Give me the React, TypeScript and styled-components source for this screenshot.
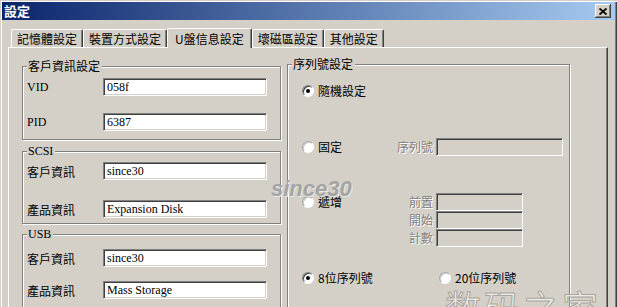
import styled, { createGlobalStyle } from 'styled-components';

const cjk = `"Noto Sans CJK TC", "Noto Sans CJK SC", sans-serif`;
const serif = `"Liberation Serif", "Noto Sans CJK TC", serif`;

const GlobalStyle = createGlobalStyle`
  html, body {
    margin: 0;
    padding: 0;
    background: #d4d0c8;
    overflow: hidden;
  }
  body {
    font-family: ${cjk};
    font-size: 12px;
  }
`;

const Window = styled.div`
  position: relative;
  width: 617px;
  height: 307px;
  box-sizing: border-box;
  padding: 2px 2px 0 2px;
  background: #d4d0c8;
  overflow: hidden;
  box-shadow: inset 1px 1px #d4d0c8, inset 2px 2px #fff, inset -1px 0 #404040,
    inset -2px 0 #808080;
`;

const TitleBar = styled.div`
  height: 18px;
  display: flex;
  align-items: center;
  justify-content: space-between;
  padding: 0 4px 0 2px;
  background: linear-gradient(to right, #0a246a, #a6caf0);
`;

const Title = styled.span`
  color: #fff;
  font: bold 13px ${cjk};
  line-height: 18px;
`;

const CloseButton = styled.div`
  width: 16px;
  height: 14px;
  box-sizing: border-box;
  background: #d4d0c8;
  display: flex;
  align-items: center;
  justify-content: center;
  box-shadow: inset -1px -1px #404040, inset 1px 1px #fff, inset -2px -2px #808080;
`;

const TabStrip = styled.div`
  display: flex;
  align-items: flex-end;
  height: 19px;
  margin-top: 8px;
  padding-left: 9px;
`;

const Tab = styled.div<{ $active?: boolean }>`
  position: relative;
  z-index: ${(p) => (p.$active ? 1 : 0)};
  height: ${(p) => (p.$active ? 20 : 18)}px;
  margin-bottom: ${(p) => (p.$active ? -1 : 0)}px;
  padding: 0 ${(p) => (p.$active ? 7 : 5)}px;
  box-sizing: border-box;
  display: flex;
  align-items: center;
  font: 12px ${cjk};
  color: #000;
  background: #d4d0c8;
  border-top: 1px solid #fff;
  border-left: 1px solid #fff;
  border-right: 1px solid #404040;
  border-radius: 2px 2px 0 0;
  box-shadow: inset -1px 0 #808080;
`;

const Panel = styled.div`
  margin-left: 6px;
  width: 600px;
  height: 300px;
  box-sizing: border-box;
  border-top: 1px solid #fff;
  border-left: 1px solid #fff;
  border-right: 1px solid #404040;
  box-shadow: inset -1px 0 #808080;
  padding: 16px 0 0 13px;
  display: flex;
  gap: 6px;
`;

const LeftColumn = styled.div`
  width: 259px;
  margin-top: 2px;
  display: flex;
  flex-direction: column;
`;

const GroupBox = styled.div<{ $mt: number; $pt: number; $pb: number; $gap: number }>`
  position: relative;
  margin-top: ${(p) => p.$mt}px;
  padding: ${(p) => p.$pt}px 13px ${(p) => p.$pb}px 4px;
  border: 1px solid #808080;
  box-shadow: inset 1px 1px #fff, 1px 1px #fff;
  display: flex;
  flex-direction: column;
  gap: ${(p) => p.$gap}px;
`;

const Caption = styled.span<{ $latin?: boolean }>`
  position: absolute;
  top: -8px;
  left: 4px;
  padding: 0 2px 0 1px;
  background: #d4d0c8;
  font: 12px ${(p) => (p.$latin ? serif : cjk)};
  line-height: 14px;
  color: #000;
`;

const FieldRow = styled.div`
  display: grid;
  grid-template-columns: 76px 164px;
  align-items: center;
`;

const FieldLabel = styled.span<{ $latin?: boolean }>`
  font: ${(p) => (p.$latin ? `12px ${serif}` : `12px ${cjk}`)};
  color: #000;
`;

const TextBox = styled.input<{ $w: number; $h?: number }>`
  width: ${(p) => p.$w}px;
  height: ${(p) => p.$h ?? 18}px;
  box-sizing: border-box;
  margin: 0;
  padding: 0 0 0 3px;
  font: 12px ${serif};
  color: #000;
  background: ${(p) => (p.disabled ? '#d4d0c8' : '#fff')};
  border: 1px solid;
  border-color: #808080 #fff #fff #808080;
  box-shadow: inset 1px 1px #404040, inset -1px -1px #d4d0c8;
  outline: none;
`;

const SerialGroup = styled.div`
  position: relative;
  width: 283px;
  height: 260px;
  box-sizing: border-box;
  padding: 17px 0 0 14px;
  border: 1px solid #808080;
  box-shadow: inset 1px 1px #fff, 1px 1px #fff;
  display: flex;
  flex-direction: column;
`;

const OptionRow = styled.div<{ $mt?: number; $cols: string }>`
  margin-top: ${(p) => p.$mt ?? 0}px;
  display: grid;
  grid-template-columns: ${(p) => p.$cols};
  grid-auto-rows: 18px;
  align-items: center;
`;

const Radio = styled.label`
  display: flex;
  align-items: center;
  gap: 4px;
  font: 12px ${cjk};
  line-height: 14px;
  white-space: nowrap;
  color: #000;
`;

const RadioDot = styled.span<{ $checked?: boolean }>`
  width: 12px;
  height: 12px;
  box-sizing: border-box;
  border-radius: 50%;
  background: #fff;
  border: 1px solid;
  border-color: ${(p) =>
    p.$checked ? '#808080 #fff #fff #808080' : '#a8a8a8 #fff #fff #a8a8a8'};
  box-shadow: ${(p) => (p.$checked ? 'inset 1px 1px #404040' : 'inset 1px 1px #c8c8c8')};
  display: flex;
  align-items: center;
  justify-content: center;
  &::after {
    content: '';
    width: 4px;
    height: 4px;
    border-radius: 50%;
    background: ${(p) => (p.$checked ? '#000' : 'transparent')};
  }
`;

const DimLabel = styled.span`
  justify-self: end;
  padding-right: 3px;
  font: 12px ${cjk};
  line-height: 14px;
  white-space: nowrap;
  color: #808080;
  text-shadow: 1px 1px #fff;
`;

const Stamp = styled.span`
  position: absolute;
  left: 271px;
  top: 178px;
  font: italic bold 22px "Liberation Sans", sans-serif;
  line-height: 1;
  color: #a4a4a4;
  text-shadow: 1px 1px #e8e8e8;
  pointer-events: none;
`;

const SiteMark = styled.span`
  position: absolute;
  left: 445px;
  top: 288px;
  font: 36px "Noto Sans CJK SC", sans-serif;
  line-height: 1;
  letter-spacing: 3px;
  color: rgba(240, 239, 234, 0.9);
  -webkit-text-stroke: 1px #aaa69e;
  pointer-events: none;
`;

const tabs = ['記憶體設定', '裝置方式設定', 'U盤信息設定', '壞磁區設定', '其他設定'];

const groups = [
  {
    caption: '客戶資訊設定',
    latin: false,
    mt: 0,
    pt: 11,
    pb: 8,
    gap: 17,
    rows: [
      { label: 'VID', latin: true, value: '058f' },
      { label: 'PID', latin: true, value: '6387' },
    ],
  },
  {
    caption: 'SCSI',
    latin: true,
    mt: 11,
    pt: 10,
    pb: 5,
    gap: 20,
    rows: [
      { label: '客戶資訊', latin: false, value: 'since30' },
      { label: '產品資訊', latin: false, value: 'Expansion Disk' },
    ],
  },
  {
    caption: 'USB',
    latin: true,
    mt: 10,
    pt: 14,
    pb: 8,
    gap: 14,
    rows: [
      { label: '客戶資訊', latin: false, value: 'since30' },
      { label: '產品資訊', latin: false, value: 'Mass Storage' },
    ],
  },
];

function CloseGlyph() {
  return (
    <svg width="8" height="7" viewBox="0 0 8 7">
      <path d="M0.5 0.5 L7.5 6.5 M7.5 0.5 L0.5 6.5" stroke="#000" strokeWidth="1.8" />
    </svg>
  );
}

export default function App() {
  return (
    <>
      <GlobalStyle />
      <Window>
        <TitleBar>
          <Title>設定</Title>
          <CloseButton>
            <CloseGlyph />
          </CloseButton>
        </TitleBar>

        <TabStrip>
          {tabs.map((t) => (
            <Tab key={t} $active={t === 'U盤信息設定'}>
              {t}
            </Tab>
          ))}
        </TabStrip>

        <Panel>
          <LeftColumn>
            {groups.map((g) => (
              <GroupBox key={g.caption} $mt={g.mt} $pt={g.pt} $pb={g.pb} $gap={g.gap}>
                <Caption $latin={g.latin}>{g.caption}</Caption>
                {g.rows.map((r) => (
                  <FieldRow key={r.label}>
                    <FieldLabel $latin={r.latin}>{r.label}</FieldLabel>
                    <TextBox $w={164} readOnly value={r.value} />
                  </FieldRow>
                ))}
              </GroupBox>
            ))}
          </LeftColumn>

          <SerialGroup>
            <Caption>序列號設定</Caption>
            <OptionRow $cols="auto">
              <Radio>
                <RadioDot $checked />
                隨機設定
              </Radio>
            </OptionRow>
            <OptionRow $mt={38} $cols="94px 40px 127px">
              <Radio>
                <RadioDot />
                固定
              </Radio>
              <DimLabel>序列號</DimLabel>
              <TextBox $w={127} disabled />
            </OptionRow>
            <OptionRow $mt={37} $cols="94px 40px 87px">
              <Radio>
                <RadioDot />
                遞增
              </Radio>
              <DimLabel>前置</DimLabel>
              <TextBox $w={87} disabled />
              <span />
              <DimLabel>開始</DimLabel>
              <TextBox $w={87} disabled />
              <span />
              <DimLabel>計數</DimLabel>
              <TextBox $w={87} disabled />
            </OptionRow>
            <OptionRow $mt={22} $cols="137px auto">
              <Radio>
                <RadioDot $checked />
                8位序列號
              </Radio>
              <Radio>
                <RadioDot />
                20位序列號
              </Radio>
            </OptionRow>
          </SerialGroup>
        </Panel>

        <Stamp>since30</Stamp>
        <SiteMark>数码之家</SiteMark>
      </Window>
    </>
  );
}
